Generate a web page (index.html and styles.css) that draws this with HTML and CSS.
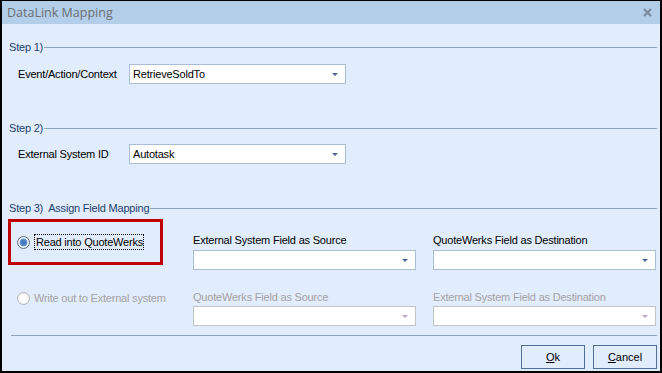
FILE: index.html
```html
<!DOCTYPE html>
<html lang="en">

<head>
  <meta charset="UTF-8">
  <title>DataLink Mapping</title>
  <link rel="stylesheet" href="styles.css">
</head>

<body>
  <div class="window">
    <div class="titlebar">
      <span class="title">DataLink Mapping</span>
      <svg class="close" width="9" height="9" viewBox="0 0 9 9">
        <path d="M1 1 L8 8 M8 1 L1 8" stroke="#7d8a9b" stroke-width="2.2" />
      </svg>
    </div>

    <div class="content">
      <div class="step step-1">
        <span>Step 1)</span>
        <div class="rule"></div>
      </div>
      <div class="field-row first">
        <label>Event/Action/Context</label>
        <div class="combo"><span>RetrieveSoldTo</span><i class="arrow"></i></div>
      </div>

      <div class="step step-2">
        <span>Step 2)</span>
        <div class="rule"></div>
      </div>
      <div class="field-row">
        <label>External System ID</label>
        <div class="combo"><span>Autotask</span><i class="arrow"></i></div>
      </div>

      <div class="step step-3">
        <span>Step 3)&nbsp; Assign Field Mapping</span>
        <div class="rule"></div>
      </div>

      <div class="mapping">
        <div class="choice highlight">
          <span class="radio checked"></span>
          <span class="focus">Read into QuoteWerks</span>
        </div>
        <div class="col top">
          <div class="col-label">External System Field as Source</div>
          <div class="combo"><i class="arrow"></i></div>
        </div>
        <div class="col top">
          <div class="col-label">QuoteWerks Field as Destination</div>
          <div class="combo"><i class="arrow"></i></div>
        </div>

        <div class="choice disabled">
          <span class="radio"></span>
          <span>Write out to External system</span>
        </div>
        <div class="col bottom disabled">
          <div class="col-label">QuoteWerks Field as Source</div>
          <div class="combo"><i class="arrow"></i></div>
        </div>
        <div class="col bottom disabled">
          <div class="col-label">External System Field as Destination</div>
          <div class="combo"><i class="arrow"></i></div>
        </div>
      </div>

      <div class="separator"></div>

      <div class="buttons">
        <button><u>O</u>k</button>
        <button><u>C</u>ancel</button>
      </div>
    </div>
  </div>
</body>

</html>
```

FILE: styles.css
```css
body {
  margin: 0;
  padding: 0;
  font-family: 'Liberation Sans', Arial, sans-serif;
  font-size: 11px;
  letter-spacing: -0.2px;
  color: #000;
}

.window {
  width: 662px;
  height: 373px;
  box-sizing: border-box;
  border: 2px solid #000;
  border-top-width: 1px;
  background: #e1ecfc;
  overflow: hidden;
}

.titlebar {
  height: 23px;
  background: #b3cee9;
  display: flex;
  align-items: center;
  justify-content: space-between;
  padding: 0 8px 0 5px;
}

.title {
  font-family: 'Open Sans', sans-serif;
  font-size: 12.5px;
  letter-spacing: 0;
  color: #6b6f75;
}

.content {
  padding: 0 3px 0 7px;
}

.step {
  display: flex;
  align-items: center;
  height: 14px;
  line-height: 14px;
  color: #1e3f6e;
}

.step .rule {
  flex: 1;
  height: 1px;
  background: #8ea2bb;
  margin-left: 1px;
}

.step-1 {
  margin-top: 16px;
}

.step-2,
.step-3 {
  margin-top: 37px;
}

.field-row {
  display: flex;
  align-items: center;
  height: 20px;
  margin-top: 9px;
}

.field-row.first {
  margin-top: 10px;
}

.field-row label {
  width: 111px;
  padding-left: 9px;
}

.field-row .combo {
  width: 217px;
}

.combo {
  height: 20px;
  box-sizing: border-box;
  background: #fff;
  border: 1px solid #a9bdd6;
  display: flex;
  align-items: center;
  justify-content: space-between;
  padding: 0 7px 0 3px;
}

.arrow {
  width: 0;
  height: 0;
  border-left: 3px solid transparent;
  border-right: 3px solid transparent;
  border-top: 3px solid #4c6a95;
  margin-left: auto;
}

.mapping {
  display: grid;
  grid-template-columns: 168px 223px 223px;
  column-gap: 17px;
  margin-top: 4px;
  margin-left: -1px;
}

.choice {
  display: flex;
  align-items: center;
  gap: 4px;
}

.highlight {
  width: 155px;
  height: 46px;
  box-sizing: border-box;
  border: 3px solid #c00000;
  padding-left: 6px;
}

.choice.disabled {
  color: #a3a3a3;
  padding-left: 9px;
  margin-top: 21px;
  height: 14px;
  white-space: nowrap;
}

.radio {
  width: 11px;
  height: 11px;
  flex: none;
  border-radius: 50%;
  border: 1px solid #b4b4b4;
  background: radial-gradient(circle, #fff 40%, #e8e8e8 100%);
}

.radio.checked {
  border-color: #5c6f86;
  background: radial-gradient(circle, #3d6fb4 0, #5b8ed0 45%, #f4f6f9 55%, #dfe6ef 100%);
}

.focus {
  border: 1px dotted #000;
  padding: 1px 0 1px 1px;
}

.col.top {
  padding-top: 14px;
}

.col.bottom {
  padding-top: 20px;
}

.col-label {
  height: 14px;
  line-height: 14px;
  margin-bottom: 3px;
  white-space: nowrap;
}

.col.bottom .col-label {
  margin-bottom: 2px;
}

.col.disabled .col-label {
  color: #a3a3a3;
}

.col.disabled .combo {
  border-color: #c4c4c4;
}

.col.disabled .arrow {
  border-top-color: #b9a9c3;
}

.separator {
  height: 1px;
  background: #8ea2bb;
  margin: 9px 0 0 2px;
}

.buttons {
  display: flex;
  justify-content: flex-end;
  gap: 8px;
  margin-top: 9px;
}

button {
  width: 64px;
  height: 24px;
  background: #e1ecfc;
  border: 1px solid #4e6f98;
  font-family: 'Liberation Sans', Arial, sans-serif;
  font-size: 11px;
  color: #000;
  padding: 0;
}
```
